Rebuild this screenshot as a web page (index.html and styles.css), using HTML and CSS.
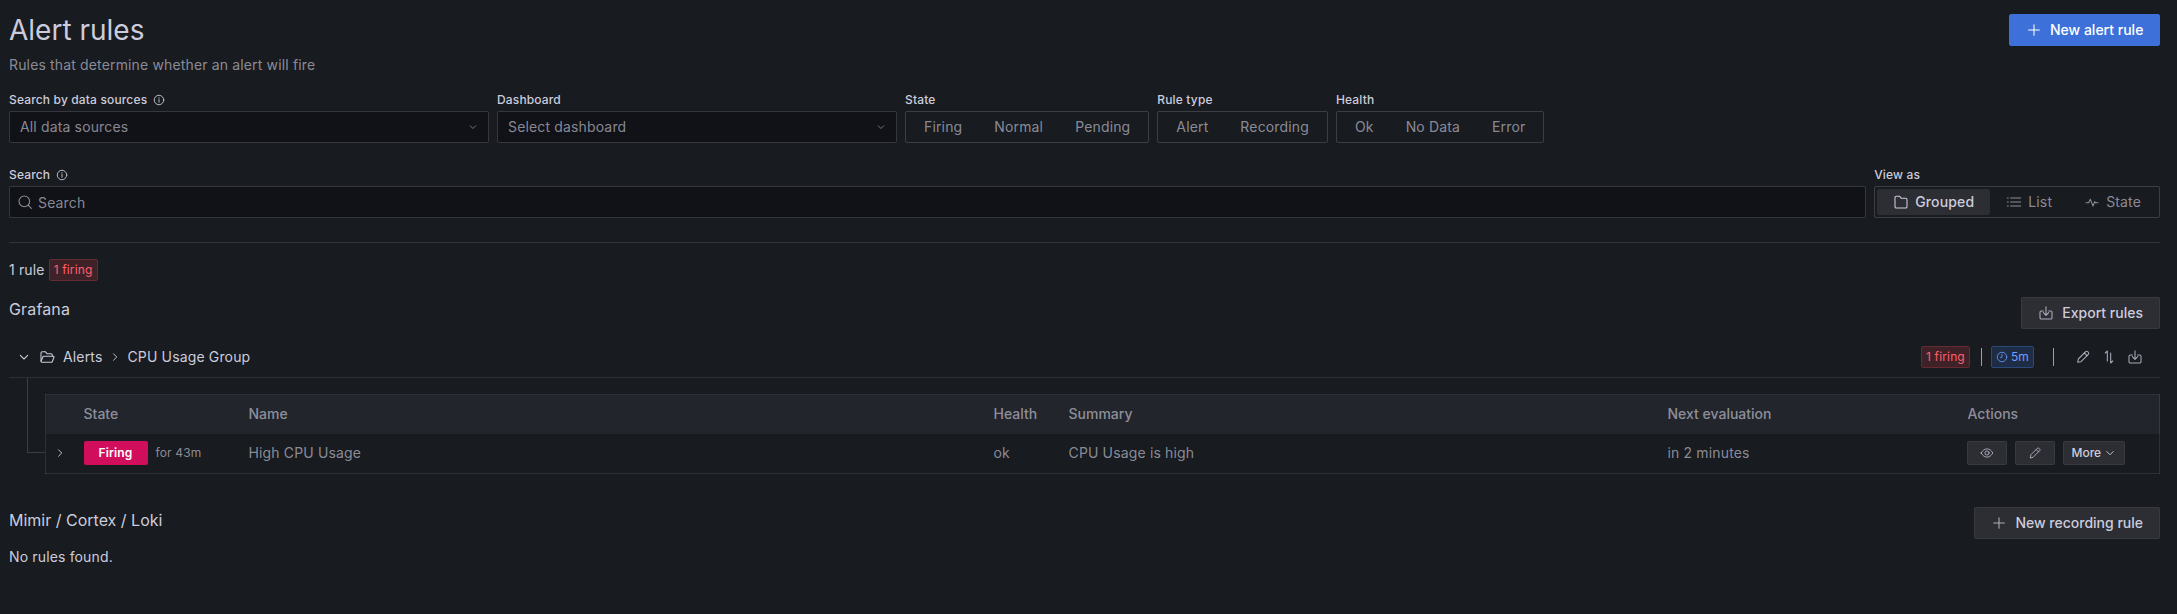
FILE: index.html
```html
<!DOCTYPE html>
<html lang="en">
<head>
<meta charset="utf-8">
<title>Alert rules</title>
<link rel="stylesheet" href="styles.css">
</head>
<body>

<svg class="sprite" xmlns="http://www.w3.org/2000/svg">
	<symbol id="i-plus" viewBox="0 0 24 24"><path d="M12 4v16M4 12h16"/></symbol>
	<symbol id="i-info" viewBox="0 0 24 24"><circle cx="12" cy="12" r="9.5"/><path d="M12 11v5.500M12 7.200v1"/></symbol>
	<symbol id="i-down" viewBox="0 0 24 24"><path d="M6.500 9.500l5.500 5.500 5.500-5.500"/></symbol>
	<symbol id="i-right" viewBox="0 0 24 24"><path d="M9.500 6.500l5.500 5.500-5.500 5.500"/></symbol>
	<symbol id="i-search" viewBox="0 0 24 24"><circle cx="11" cy="11" r="8"/><path d="M17 17l4.500 4.500"/></symbol>
	<symbol id="i-folder" viewBox="0 0 24 24"><path d="M5 3.500h5l2.500 3H19a2 2 0 0 1 2 2V19a2 2 0 0 1-2 2H5a2 2 0 0 1-2-2V5.500a2 2 0 0 1 2-2z"/></symbol>
	<symbol id="i-folder-open" viewBox="0 0 24 24"><path d="M3 18V6a2 2 0 0 1 2-2h4.500l2.500 3h6a2 2 0 0 1 2 2v2"/><path d="M3 18.500L6 11.500a1 1 0 0 1 1-.6h14.500a1 1 0 0 1 1 1.400L20 18.700a2 2 0 0 1-1.800 1.300H5a2 2 0 0 1-2-1.500z"/></symbol>
	<symbol id="i-list" viewBox="0 0 24 24"><path d="M7 6h15M7 12h15M7 18h15M2 6h1.500M2 12h1.500M2 18h1.500"/></symbol>
	<symbol id="i-heart" viewBox="0 0 24 24"><path d="M3 13h4l2.500-5 4 10 2.500-6.500 1 1.500h4"/></symbol>
	<symbol id="i-export" viewBox="0 0 24 24"><path d="M8 9H5a2 2 0 0 0-2 2v8a2 2 0 0 0 2 2h14a2 2 0 0 0 2-2v-8a2 2 0 0 0-2-2h-3"/><path d="M12 2.500v12.500M8 11.500l4 4 4-4"/></symbol>
	<symbol id="i-pen" viewBox="0 0 24 24"><path d="M4 20l1-5L16 4a2.100 2.100 0 0 1 3 0l1 1a2.100 2.100 0 0 1 0 3L9 19z"/><path d="M14 6l4 4"/></symbol>
	<symbol id="i-swap" viewBox="0 0 24 24"><path d="M9.500 18V3L6.500 6M14.500 6v15l3-3"/></symbol>
	<symbol id="i-eye" viewBox="0 0 24 24"><path d="M2 12c2.500-4.500 6-7 10-7s7.500 2.500 10 7c-2.500 4.500-6 7-10 7s-7.500-2.500-10-7z"/><circle cx="12" cy="12" r="3.500"/></symbol>
	<symbol id="i-clock" viewBox="0 0 24 24"><circle cx="12" cy="12" r="9.500"/><path d="M12 6.500V12l-3.500 1.500"/></symbol>
</svg>

<div class="page">

	<header class="page-head">
		<div>
			<h1>Alert rules</h1>
			<div class="subtitle">Rules that determine whether an alert will fire</div>
		</div>
		<a class="btn btn-primary new-alert"><svg class="icon"><use href="#i-plus"/></svg>New alert rule</a>
	</header>

	<div class="filters">
		<div class="field w-source">
			<div class="label">Search by data sources <svg class="icon-info"><use href="#i-info"/></svg></div>
			<div class="input"><span class="grow">All data sources</span><svg class="icon-sm"><use href="#i-down"/></svg></div>
		</div>
		<div class="field w-dash">
			<div class="label">Dashboard</div>
			<div class="input"><span class="grow">Select dashboard</span><svg class="icon-sm"><use href="#i-down"/></svg></div>
		</div>
		<div class="field">
			<div class="label">State</div>
			<div class="radio"><span>Firing</span><span>Normal</span><span>Pending</span></div>
		</div>
		<div class="field">
			<div class="label">Rule type</div>
			<div class="radio"><span>Alert</span><span>Recording</span></div>
		</div>
		<div class="field">
			<div class="label">Health</div>
			<div class="radio"><span>Ok</span><span>No Data</span><span>Error</span></div>
		</div>
	</div>

	<div class="filters second">
		<div class="field grow">
			<div class="label">Search <svg class="icon-info"><use href="#i-info"/></svg></div>
			<div class="input search"><svg class="icon"><use href="#i-search"/></svg><span>Search</span></div>
		</div>
		<div class="field">
			<div class="label">View as</div>
			<div class="radio view">
				<span class="on"><svg class="icon"><use href="#i-folder"/></svg>Grouped</span>
				<span><svg class="icon"><use href="#i-list"/></svg>List</span>
				<span><svg class="icon"><use href="#i-heart"/></svg>State</span>
			</div>
		</div>
	</div>

	<hr class="divider">

	<div class="stats">1 rule <span class="badge red">1 firing</span></div>

	<section class="source">
		<h5>Grafana</h5>
		<a class="btn"><svg class="icon"><use href="#i-export"/></svg>Export rules</a>
	</section>

	<div class="group-row">
		<svg class="icon chev"><use href="#i-down"/></svg>
		<svg class="icon folder"><use href="#i-folder-open"/></svg>
		<span>Alerts</span>
		<svg class="icon-sm crumb"><use href="#i-right"/></svg>
		<span class="grow">CPU Usage Group</span>
		<span class="badge red">1 firing</span>
		<span class="sep first"></span>
		<span class="badge blue"><svg class="icon-xs"><use href="#i-clock"/></svg>5m</span>
		<span class="sep second-sep"></span>
		<svg class="icon action"><use href="#i-pen"/></svg>
		<svg class="icon action"><use href="#i-swap"/></svg>
		<svg class="icon action"><use href="#i-export"/></svg>
	</div>

	<div class="group-body">
		<div class="tree"></div>
		<table class="rules">
			<colgroup>
				<col class="c-exp"><col class="c-state"><col class="c-name"><col class="c-health"><col class="c-summary"><col class="c-next"><col>
			</colgroup>
			<thead>
				<tr><th></th><th>State</th><th>Name</th><th>Health</th><th>Summary</th><th>Next evaluation</th><th>Actions</th></tr>
			</thead>
			<tbody>
				<tr>
					<td class="exp"><svg class="icon-sm"><use href="#i-right"/></svg></td>
					<td><span class="firing">Firing</span><span class="since">for 43m</span></td>
					<td>High CPU Usage</td>
					<td>ok</td>
					<td>CPU Usage is high</td>
					<td>in 2 minutes</td>
					<td>
						<div class="row-actions">
							<a class="btn btn-sm icon-btn"><svg class="icon"><use href="#i-eye"/></svg></a>
							<a class="btn btn-sm icon-btn"><svg class="icon"><use href="#i-pen"/></svg></a>
							<a class="btn btn-sm more">More<svg class="icon-sm"><use href="#i-down"/></svg></a>
						</div>
					</td>
				</tr>
			</tbody>
		</table>
	</div>

	<section class="source mimir">
		<h5>Mimir / Cortex / Loki</h5>
		<a class="btn"><svg class="icon"><use href="#i-plus"/></svg>New recording rule</a>
	</section>
	<div class="empty">No rules found.</div>

</div>

</body>
</html>
```

FILE: styles.css
```css
* {
	box-sizing: border-box;
}
body {
	margin: 0;
	background: #181b1f;
	color: #ccccdc;
	font-family: Inter, "Noto Sans", sans-serif;
	font-size: 14px;
	line-height: 20px;
	letter-spacing: .01071em;
}
.sprite {
	display: none;
}
.page {
	padding: 14px 17px 0 9px;
}
.grow {
	flex: 1;
}

/* icons */
svg {
	fill: none;
	stroke: currentColor;
	stroke-width: 1.6;
	stroke-linecap: round;
	stroke-linejoin: round;
	flex: none;
}
.icon {
	width: 16px;
	height: 16px;
}
.icon-sm {
	width: 14px;
	height: 14px;
}
.icon-xs {
	width: 12px;
	height: 12px;
	margin-right: 3px;
}
.icon-info {
	width: 12px;
	height: 12px;
	margin-left: 2px;
	vertical-align: -1.5px;
	stroke-width: 1.8;
}

/* header */
.page-head {
	display: flex;
	justify-content: space-between;
	align-items: flex-start;
}
h1 {
	margin: 0;
	font-size: 28px;
	font-weight: 400;
	line-height: 32px;
	letter-spacing: 0;
}
.subtitle {
	margin-top: 9px;
	color: rgba(204, 204, 220, .65);
}

/* buttons */
.btn {
	display: inline-flex;
	align-items: center;
	height: 32px;
	padding: 0 16px;
	border: 1px solid rgba(204, 204, 220, .08);
	border-radius: 2px;
	background: #2c2e34;
	color: #ccccdc;
	font-weight: 500;
	letter-spacing: 0;
	white-space: nowrap;
}
.btn .icon {
	margin-right: 8px;
	color: rgba(204, 204, 220, .8);
}
.btn-primary {
	background: #3d71d9;
	border-color: #3d71d9;
	color: #fff;
}
.btn-primary .icon {
	color: #fff;
}
.new-alert {
	width: 151px;
}
.btn-sm {
	height: 24px;
	font-size: 12px;
	padding: 0 8px;
}

/* filters */
.filters {
	display: flex;
	gap: 8px;
	margin-top: 17px;
}
.filters.second {
	margin-top: 24px;
}
.label {
	height: 16px;
	margin-bottom: 3px;
	font-size: 12px;
	font-weight: 500;
	line-height: 16px;
}
.w-source {
	width: 480px;
}
.w-dash {
	width: 400px;
}
.input {
	display: flex;
	align-items: center;
	height: 32px;
	padding: 0 8px 0 10px;
	border: 1px solid rgba(204, 204, 220, .2);
	border-radius: 2px;
	background: #111217;
	color: rgba(204, 204, 220, .65);
}
.input .icon-sm {
	width: 12px;
	height: 12px;
	margin-right: 1px;
}
.search .icon {
	margin: 0 5px 0 -3px;
}
.search span {
	padding-top: 1px;
}
.radio {
	display: flex;
	height: 32px;
	padding: 2px;
	border: 1px solid rgba(204, 204, 220, .2);
	border-radius: 2px;
	color: rgba(204, 204, 220, .65);
}
.radio span {
	display: flex;
	align-items: center;
	padding: 0 16px;
	border-radius: 2px;
}
.radio .icon {
	margin-right: 6px;
}
.radio .on {
	background: #2c2e34;
	color: #ccccdc;
	font-weight: 500;
}
.field.grow {
	min-width: 0;
}

.divider {
	height: 1px;
	margin: 24px 0 0;
	border: 0;
	background: rgba(204, 204, 220, .14);
}

/* badges */
.badge {
	display: inline-flex;
	align-items: center;
	height: 22px;
	padding: 0 4px;
	border: 1px solid;
	border-radius: 2px;
	font-size: 12px;
	line-height: 16px;
}
.red {
	background: #3f2228;
	border-color: #662a33;
	color: #ff5f6e;
}
.blue {
	background: #1e2c45;
	border-color: #294a7a;
	color: #6e9fff;
}
.stats {
	display: flex;
	align-items: center;
	gap: 4px;
	margin-top: 16px;
}

/* sources */
.source {
	display: flex;
	justify-content: space-between;
	align-items: flex-start;
	margin-top: 16px;
}
h5 {
	margin: 1px 0 0;
	font-size: 16px;
	font-weight: 400;
	line-height: 22px;
}
.mimir {
	margin-top: 33px;
}
.mimir h5 {
	margin-top: 2px;
	letter-spacing: 0;
}
.empty {
	margin-top: 8px;
}

/* group */
.group-row {
	display: flex;
	align-items: center;
	height: 41px;
	margin-top: 8px;
	padding-left: 7px;
	border-bottom: 1px solid rgba(204, 204, 220, .12);
}
.chev {
	margin-right: 7px;
}
.folder {
	margin-right: 8px;
}
.crumb {
	margin: 0 5px 0 6px;
}
.sep {
	width: 1px;
	height: 18px;
	background: rgba(204, 204, 220, .75);
}
.sep.first {
	margin: 0 9px 0 11px;
}
.sep.second-sep {
	margin: 0 21px 0 19px;
}
.action {
	margin-right: 10px;
	color: rgba(204, 204, 220, .8);
}
.action:last-child {
	margin-right: 17px;
}
.group-body {
	display: flex;
	margin-left: 18px;
}
.tree {
	flex: none;
	width: 18px;
	height: 75px;
	border-left: 1px solid rgba(204, 204, 220, .2);
	border-bottom: 1px solid rgba(204, 204, 220, .2);
}

/* rules table */
.rules {
	flex: 1;
	margin-top: 16px;
	border: 1px solid rgba(204, 204, 220, .12);
	border-collapse: collapse;
	table-layout: fixed;
	color: rgba(204, 204, 220, .65);
}
.c-exp {
	width: 38px;
}
.c-state {
	width: 165px;
}
.c-name {
	width: 745px;
}
.c-health {
	width: 75px;
}
.c-summary {
	width: 599px;
}
.c-next {
	width: 300px;
}
.rules th {
	height: 39px;
	padding: 0;
	background: #22252b;
	font-weight: 500;
	letter-spacing: 0;
	text-align: left;
}
.rules td {
	height: 40px;
	padding: 0;
}
.exp {
	padding-left: 7px !important;
	color: #ccccdc;
}
.exp svg {
	display: block;
}
.firing {
	display: inline-block;
	width: 64px;
	height: 24px;
	margin-right: 8px;
	border-radius: 2px;
	background: #d10e5c;
	color: #fff;
	font-size: 12px;
	font-weight: 600;
	line-height: 24px;
	text-align: center;
}
.since {
	font-size: 12px;
}
.row-actions {
	display: flex;
	gap: 8px;
	margin-left: -1px;
}
.icon-btn {
	justify-content: center;
	width: 40px;
}
.icon-btn .icon {
	width: 14px;
	height: 14px;
	margin: 0;
}
.more {
	width: 62px;
}
.more .icon-sm {
	margin-left: 2px;
}
```
